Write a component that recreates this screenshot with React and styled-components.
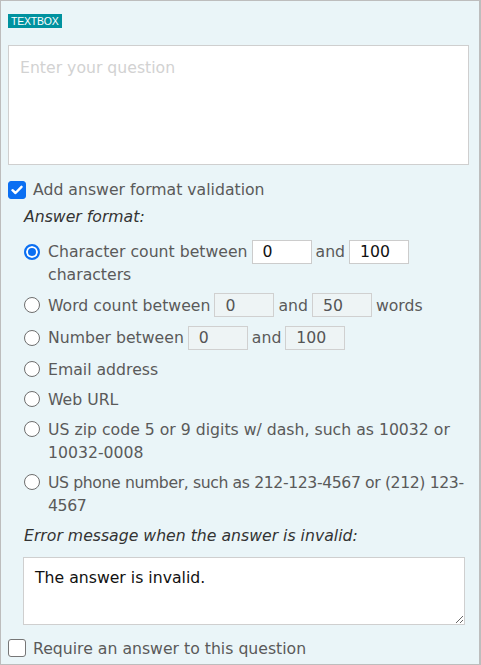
import React from "react";
import styled, { createGlobalStyle } from "styled-components";

const GlobalStyle = createGlobalStyle`
  html, body {
    margin: 0;
    padding: 0;
    background: #ffffff;
  }
  body {
    font-family: "DejaVu Sans", "Liberation Sans", sans-serif;
  }
`;

// Panel
const Panel = styled.div`
  box-sizing: border-box;
  width: 481px;
  height: 665px;
  background: #eaf5f8;
  border: 1px solid #bdbdbd;
  border-right-width: 2px;
  padding: 13px 10px 0 7px;
  color: #5a5a5a;
  font-size: 15.7px;
  overflow: hidden;
`;

const Badge = styled.div`
  width: fit-content;
  background: #00929f;
  color: #ffffff;
  font-family: "Liberation Sans", sans-serif;
  font-size: 10.5px;
  line-height: 14px;
  padding: 0 3px;
  letter-spacing: -0.2px;
`;

const QuestionBox = styled.textarea`
  display: block;
  box-sizing: border-box;
  width: 461px;
  height: 120px;
  margin: 17px 0 0 0;
  padding: 12px 11px;
  border: 1px solid #cfcfcf;
  background: #ffffff;
  resize: none;
  font-family: inherit;
  font-size: 15.7px;
  color: #333;
  outline: none;

  &::placeholder {
    color: #d2d2d2;
  }
`;

// Checkbox rows
const CheckRow = styled.label`
  display: flex;
  align-items: center;
  gap: 7px;
  line-height: 23px;
  margin-top: ${(props) => props.mt || "0"};
`;

const Check = styled.input.attrs({ type: "checkbox" })`
  appearance: none;
  box-sizing: border-box;
  width: 18px;
  height: 18px;
  margin: 0;
  flex: none;
  border-radius: 3px;
  border: 1px solid #767676;
  background: #ffffff;

  &:checked {
    background: #0b6ff2;
    border-color: #0b6ff2;
  }
`;

const CheckWrap = styled.span`
  position: relative;
  display: inline-flex;
  align-items: center;
  justify-content: center;
  flex: none;
`;

const CheckMark = styled.svg`
  position: absolute;
  pointer-events: none;
`;

// Format section
const Indented = styled.div`
  padding-left: 16px;
`;

const SectionLabel = styled.div`
  font-style: italic;
  color: #333;
  line-height: 23px;
  margin: ${(props) => props.m || "4px 0 0 0"};
`;

const OptionList = styled.div`
  display: flex;
  flex-direction: column;
  gap: 7px;
  margin-top: 11px;
`;

const Option = styled.label`
  display: flex;
  align-items: flex-start;
  gap: 8px;
  line-height: ${(props) => (props.tall ? "25px" : "23px")};
`;

const Radio = styled.input.attrs({ type: "radio" })`
  appearance: none;
  box-sizing: border-box;
  width: 16px;
  height: 16px;
  margin: ${(props) => (props.tall ? "4.5px" : "3.5px")} 0 0 0;
  flex: none;
  border-radius: 50%;
  border: 1px solid #6e6e6e;
  background: #ffffff;

  &:checked {
    border: 2px solid #0b6ff2;
    box-shadow: inset 0 0 0 2px #ffffff;
    background: #0b6ff2;
  }
`;

const OptionText = styled.span`
  flex: 1;
  letter-spacing: ${(props) => (props.tight ? "-0.4px" : "normal")};
`;

const WrappedLine = styled.span`
  display: block;
  line-height: 20px;
  padding-bottom: 1px;
`;

const NumberBox = styled.input`
  box-sizing: border-box;
  width: 60px;
  height: 24px;
  margin: 0 4px;
  padding: 0 10px;
  vertical-align: middle;
  border: 1px solid ${(props) => (props.disabled ? "#d0d0d0" : "#cccccc")};
  background: ${(props) => (props.disabled ? "#eef4f5" : "#ffffff")};
  color: ${(props) => (props.disabled ? "#555" : "#111")};
  font-family: inherit;
  font-size: 15.7px;
  outline: none;
  position: relative;
  top: -1px;
`;

const ErrorBox = styled.textarea`
  display: block;
  box-sizing: border-box;
  width: 442px;
  height: 68px;
  margin: 10px 0 0 -1px;
  padding: 10px 11px;
  border: 1px solid #cfcfcf;
  background: #ffffff;
  resize: vertical;
  font-family: inherit;
  font-size: 15.7px;
  color: #111;
  outline: none;
`;

const Checkbox = ({ checked }) => (
  <CheckWrap>
    <Check defaultChecked={checked} />
    {checked && (
      <CheckMark width="12" height="10" viewBox="0 0 12 10">
        <path
          d="M1.5 5.2 L4.5 8 L10.5 1.8"
          fill="none"
          stroke="#ffffff"
          strokeWidth="2.4"
          strokeLinecap="round"
          strokeLinejoin="round"
        />
      </CheckMark>
    )}
  </CheckWrap>
);

const App = () => (
  <>
    <GlobalStyle />
    <Panel>
      <Badge>TEXTBOX</Badge>
      <QuestionBox placeholder="Enter your question" />

      <CheckRow mt="13px">
        <Checkbox checked />
        Add answer format validation
      </CheckRow>

      <Indented>
        <SectionLabel>Answer format:</SectionLabel>
        <OptionList>
          <Option tall>
            <Radio name="fmt" tall defaultChecked />
            <OptionText>
              Character count between
              <NumberBox defaultValue="0" />
              and
              <NumberBox defaultValue="100" />
              <WrappedLine>characters</WrappedLine>
            </OptionText>
          </Option>
          <Option tall>
            <Radio name="fmt" tall />
            <OptionText>
              Word count between
              <NumberBox defaultValue="0" disabled />
              and
              <NumberBox defaultValue="50" disabled />
              words
            </OptionText>
          </Option>
          <Option tall>
            <Radio name="fmt" tall />
            <OptionText>
              Number between
              <NumberBox defaultValue="0" disabled />
              and
              <NumberBox defaultValue="100" disabled />
            </OptionText>
          </Option>
          <Option>
            <Radio name="fmt" />
            <OptionText>Email address</OptionText>
          </Option>
          <Option>
            <Radio name="fmt" />
            <OptionText>Web URL</OptionText>
          </Option>
          <Option>
            <Radio name="fmt" />
            <OptionText>
              US zip code 5 or 9 digits w/ dash, such as 10032 or 10032-0008
            </OptionText>
          </Option>
          <Option>
            <Radio name="fmt" />
            <OptionText tight>
              US phone number, such as 212-123-4567 or (212) 123-4567
            </OptionText>
          </Option>
        </OptionList>

        <SectionLabel m="7px 0 0 0">
          Error message when the answer is invalid:
        </SectionLabel>
        <ErrorBox defaultValue="The answer is invalid." />
      </Indented>

      <CheckRow mt="12px">
        <Checkbox />
        Require an answer to this question
      </CheckRow>
    </Panel>
  </>
);

export default App;
